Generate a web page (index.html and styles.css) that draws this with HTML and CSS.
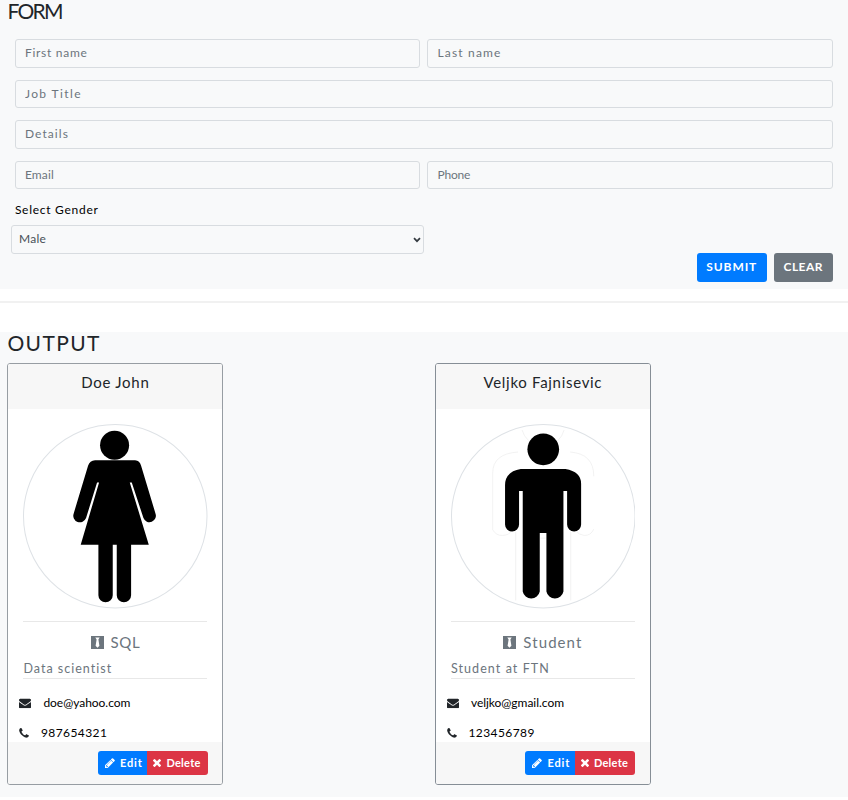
FILE: index.html
```
<!DOCTYPE html>
<html lang="en">
<head>
<meta charset="utf-8">
<title>Form</title>
<link rel="stylesheet" href="styles.css">
</head>
<body>
<svg class="defs" aria-hidden="true">
  <symbol id="envelope" viewBox="0 128 1792 1536"><path d="M1792 710v794q0 66-47 113t-113 47h-1472q-66 0-113-47t-47-113v-794q44 49 101 87 362 246 497 345 57 42 92.500 65.500t94.500 48 110 24.500h2q51 0 110-24.500t94.500-48 92.500-65.500q170-123 498-345 57-39 100-87zm0-294q0 79-49 151t-122 123q-376 261-468 325-10 7-42.500 31t-54 38.500-52 32.500-57.500 27-50 9h-2q-23 0-50-9t-57.500-27-52-32.500-54-38.500-42.500-31q-91-64-262-182.500t-205-142.500q-62-42-117-115.500t-55-136.500q0-78 41.500-130t118.500-52h1472q65 0 112.500 47t47.500 113z"/></symbol>
  <symbol id="phone" viewBox="192 128 1408 1536"><path d="M1600 1240q0 27-10 70.500t-21 68.500q-21 50-122 106-94 51-186 51-27 0-53-3.500t-57.500-12.500-47-14.500-55.500-20.500-49-18q-98-35-175-83-127-79-264-216t-216-264q-48-77-83-175-3-9-18-49t-20.500-55.500-14.500-47-12.500-57.500-3.500-53q0-92 51-186 56-101 106-122 25-11 68.500-21t70.500-10q14 0 21 3 18 6 53 76 11 19 30 54t35 63.500 31 53.500q3 4 17.500 25t21.500 35.500 7 28.500q0 20-28.500 50t-62 55-62 53-28.500 46q0 9 5 22.500t8.500 20.500 14 24 11.500 19q76 137 174 235t235 174q2 1 19 11.500t24 14 20.500 8.500 22.500 5q18 0 46-28.500t53-62 55-62 50-28.500q14 0 28.500 7t35.500 21.500 25 17.500q25 15 53.500 31t63.500 35 54 30q70 35 76 53 3 7 3 21z"/></symbol>
  <symbol id="pencil" viewBox="128 128 1536 1536"><path d="M491 1536l91-91-235-235-91 91v107h128v128h107zm523-928q0-22-22-22-10 0-17 7l-542 542q-7 7-7 17 0 22 22 22 10 0 17-7l542-542q7-7 7-17zm-54-192l416 416-832 832h-416v-416zm683 96q0 53-37 90l-166 166-416-416 166-165q36-38 90-38 53 0 91 38l235 234q37 39 37 91z"/></symbol>
  <symbol id="times" viewBox="302 302 1188 1188"><path d="M1490 1322q0 40-28 68l-136 136q-28 28-68 28t-68-28l-294-294-294 294q-28 28-68 28t-68-28l-136-136q-28-28-28-68t28-68l294-294-294-294q-28-28-28-68t28-68l136-136q28-28 68-28t68 28l294 294 294-294q28-28 68-28t68 28l136 136q28 28 28 68t-28 68l-294 294 294 294q28 28 28 68z" transform="translate(0 -64)"/></symbol>
  <symbol id="tie" viewBox="0 0 13 13"><path fill-rule="evenodd" d="M0 0h13v13H0zM4.300 1.500L5.600 3.600 4.600 9.800 6.500 11.800 8.400 9.800 7.400 3.600 8.700 1.500z"/></symbol>
</svg>

<section class="panel form-panel">
  <h1 class="heading form-heading">FORM</h1>
  <form class="form">
    <div class="row">
      <input class="field t-first" placeholder="First name">
      <input class="field t-last" placeholder="Last name">
    </div>
    <div class="row"><input class="field t-job" placeholder="Job Title"></div>
    <div class="row"><input class="field t-details" placeholder="Details"></div>
    <div class="row">
      <input class="field t-email" placeholder="Email">
      <input class="field t-phone" placeholder="Phone">
    </div>
    <label class="label" for="gender">Select Gender</label>
    <div class="select-wrap">
      <select class="field select" id="gender"><option>Male</option><option>Female</option></select>
      <svg class="chevron" viewBox="0 0 8 6"><path d="M1 1.200l3 3 3-3" fill="none" stroke="#343a40" stroke-width="1.700"/></svg>
    </div>
    <div class="actions">
      <button type="button" class="btn submit">SUBMIT</button>
      <button type="button" class="btn clear">CLEAR</button>
    </div>
  </form>
</section>

<hr class="divider">

<section class="panel output-panel">
  <h1 class="heading output-heading">OUTPUT</h1>
  <div class="cards">
    <article class="card card-soft">
      <header class="card-header t-doe">Doe John</header>
      <div class="card-body">
        <svg class="avatar" viewBox="70 43 553 553">
          <circle cx="346.500" cy="319.500" r="275" fill="#fff" stroke="#dee2e6" stroke-width="3"/>
          <circle cx="344.500" cy="107" r="43.500"/>
          <path d="M286 152H406Q420 153 424 168L467 311A19 19 0 0 1 431 325L396 218H390L447 405H394V556A21 21 0 0 1 351 556V405H339V556A21 21 0 0 1 296 556V405H243L298 218H292L259 325A19 19 0 0 1 222 311L265 168Q270 153 286 152z"/>
        </svg>
        <div class="title"><svg class="tie"><use href="#tie"/></svg><span class="t-sql">SQL</span></div>
        <p class="details t-data">Data scientist</p>
        <div class="contact"><svg class="envelope"><use href="#envelope"/></svg><span class="t-mail">doe@yahoo.com</span></div>
        <div class="contact"><svg class="phone"><use href="#phone"/></svg><span class="t-num">987654321</span></div>
      </div>
      <footer class="card-footer">
        <button class="mini edit"><svg class="pencil"><use href="#pencil"/></svg><span>Edit</span></button><button class="mini delete"><svg class="times"><use href="#times"/></svg><span>Delete</span></button>
      </footer>
    </article>
    <article class="card">
      <header class="card-header t-veljko">Veljko Fajnisevic</header>
      <div class="card-body">
        <svg class="avatar" viewBox="63 43 553 553">
          <circle cx="339.500" cy="319.500" r="275" fill="#fff" stroke="#dee2e6" stroke-width="3"/>
          <g fill="none" stroke="#ececec" stroke-width="2">
            <path d="M276 61Q281 80 296 93M402 61Q397 80 383 93"/>
            <path d="M264 127Q188 132 188 190V360Q198 378 218 377Q238 376 243 364M420 127Q491 132 491 200M491 358Q482 378 462 377Q446 374 440 366"/>
            <path d="M257 366V572M422 366V572M331 385H347"/>
          </g>
          <circle cx="339.500" cy="119" r="47.500"/>
          <path d="M272 178H406Q453 186 453 222V344A21 21 0 0 1 411 344V244H400V545A26 26 0 0 1 349 545V370H329V545A26 26 0 0 1 278 545V244H267V344A21 21 0 0 1 225 344V228Q224 186 272 178z"/>
        </svg>
        <div class="title"><svg class="tie"><use href="#tie"/></svg><span class="t-student">Student</span></div>
        <p class="details t-ftn">Student at FTN</p>
        <div class="contact"><svg class="envelope"><use href="#envelope"/></svg><span class="t-mail">veljko@gmail.com</span></div>
        <div class="contact"><svg class="phone"><use href="#phone"/></svg><span class="t-num">123456789</span></div>
      </div>
      <footer class="card-footer">
        <button class="mini edit"><svg class="pencil"><use href="#pencil"/></svg><span>Edit</span></button><button class="mini delete"><svg class="times"><use href="#times"/></svg><span>Delete</span></button>
      </footer>
    </article>
  </div>
</section>
</body>
</html>
```

FILE: styles.css
```
* { box-sizing: border-box; }
body {
  margin: 0;
  background: #fff;
  color: #212529;
  font: 12px/18px Lato, sans-serif;
}
.defs { display: none; }
svg { flex: none; fill: currentColor; }

.panel { background: #f8f9fa; padding: 0 8px 0 7.400px; }
.form-panel { height: 289.400px; }
.heading { margin: 0; font-size: 21px; line-height: 22px; font-weight: 400; }
.form-heading { letter-spacing: -1.700px; }
.output-heading { letter-spacing: 1.380px; }

.form { padding: 17px 7.5px 0; }
.row { display: flex; gap: 7.5px; margin-bottom: 12px; }
.field {
  flex: 1;
  min-width: 0;
  height: 28.5px;
  padding: 0 9px;
  border: 1px solid #d8dce0;
  border-radius: 3px;
  background: transparent;
  color: #495057;
  font: 12px/18px Lato, sans-serif;
}
.field::placeholder { color: #6c757d; opacity: 1; }
.t-first { letter-spacing: .73px; padding-bottom: 2px; }
.t-last { letter-spacing: 1.180px; padding-bottom: 2px; }
.t-job { letter-spacing: 1.390px; }
.t-details { letter-spacing: 1.080px; padding-bottom: 2px; }
.t-email { letter-spacing: .17px; padding-bottom: 1px; }
.t-phone { letter-spacing: -.18px; padding-bottom: 1px; }
.label { display: block; height: 24px; color: #000; letter-spacing: .73px; }
.select-wrap { position: relative; display: flex; width: 413px; margin-left: -4px; }
.select { appearance: none; padding: 0 7px; letter-spacing: .3px; }
.chevron { position: absolute; right: 3px; top: 12px; width: 8px; height: 6px; }
.actions { display: flex; justify-content: flex-end; gap: 7.5px; margin-top: -.5px; }
.btn {
  height: 28.5px;
  padding: 0;
  border: 0;
  border-radius: 3px;
  color: #fff;
  font: 700 12px/18px Lato, sans-serif;
}
.submit { width: 69.5px; background: #007bff; letter-spacing: .9px; }
.clear { width: 58.5px; background: #6c757d; letter-spacing: .47px; }

.divider { height: 2px; margin: 11.600px 0 29px; border: 0; background: #f1f1f1; }

.output-panel { height: 465px; }
.output-heading { height: 31px; }
.cards { display: grid; grid-template-columns: 216px 216px; column-gap: 211.5px; }
.card {
  height: 422px;
  display: flex;
  flex-direction: column;
  overflow: hidden;
  border: 1px solid #868e96;
  border-radius: 3px;
  background: #fff;
}
.card-soft { border-color: #979da3; }
.card-header {
  flex: none;
  height: 45.5px;
  padding-top: 8px;
  background: #f7f7f7;
  font-size: 15px;
  line-height: 20px;
  text-align: center;
}
.t-doe { letter-spacing: .73px; }
.t-veljko { letter-spacing: .7px; }
.card-body { flex: 1; min-height: 0; padding: 15px 15px 0; }
.avatar { display: block; width: 184.5px; height: 184.5px; margin-bottom: 12px; fill: #000; }
.title {
  display: flex;
  justify-content: center;
  align-items: center;
  gap: 7px;
  height: 39px;
  padding-top: 3px;
  border-top: 1px solid #e8e8e8;
  color: #6c757d;
  font-size: 15px;
}
.tie { width: 13px; height: 13px; }
.t-sql { letter-spacing: .58px; }
.t-student { letter-spacing: 1.080px; }
.details {
  height: 19.5px;
  margin: 0 0 15px;
  border-bottom: 1px solid #e8e8e8;
  color: #6c757d;
  font-size: 12.5px;
  line-height: 18px;
}
.t-data { letter-spacing: 1.010px; }
.t-ftn { letter-spacing: 1.080px; }
.contact { display: flex; align-items: center; height: 18px; margin: 0 0 12px -4px; color: #000; }
.contact svg { color: #212529; }
.envelope { width: 12px; height: 10.300px; margin-right: 12px; }
.phone { width: 10px; height: 10.500px; margin-right: 11.500px; }
.t-mail { letter-spacing: -.03px; }
.t-num { letter-spacing: .42px; }
.card-footer {
  flex: none;
  display: flex;
  justify-content: flex-end;
  height: 42px;
  padding: 9.5px 14.5px 0;
  background: #f7f7f7;
}
.mini {
  display: flex;
  align-items: center;
  height: 24px;
  padding: 0 0 0 6px;
  border: 0;
  color: #fff;
  font: 700 11px/16px Lato, sans-serif;
}
.edit { width: 49.5px; gap: 5px; padding-left: 7px; border-radius: 3px 0 0 3px; background: #007bff; letter-spacing: .9px; }
.delete { width: 60.5px; gap: 5px; border-radius: 0 3px 3px 0; background: #dc3545; letter-spacing: .27px; }
.pencil { width: 10px; height: 10px; }
.times { width: 8px; height: 8px; }
```
